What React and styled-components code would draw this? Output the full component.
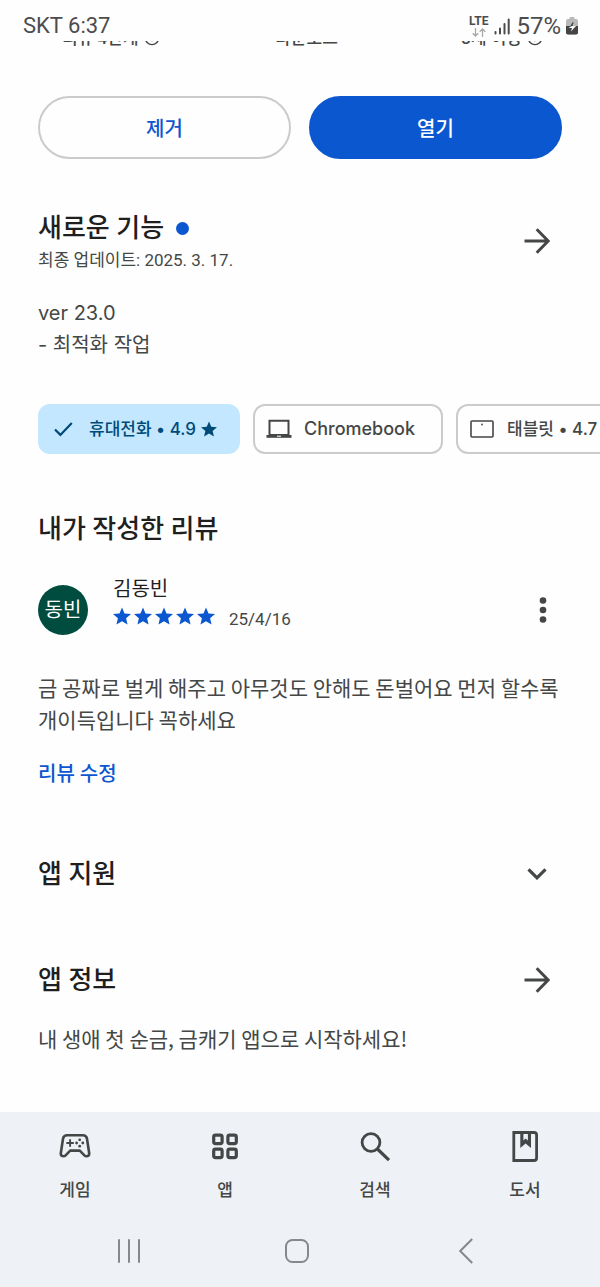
import React from 'react';
import styled, { createGlobalStyle } from 'styled-components';

const GlobalStyle = createGlobalStyle`
    *{
        box-sizing:border-box;
    }

    body{
        margin:0;
        background-color:#fefefe;
        color:#1f1f1f;
        font-family:Roboto, "Noto Sans CJK KR", sans-serif;
    }

    h2, p{
        margin:0;
    }

    button{
        padding:0;
        border:none;
        background:none;
        color:inherit;
        font-family:inherit;
        cursor:pointer;
    }

    svg{
        display:block;
        flex:none;
    }
`;

const Page = styled.div`
    display:flex;
    flex-direction:column;
    min-height:100vh;
`;

const StatusBar = styled.header`
    display:flex;
    align-items:flex-end;
    justify-content:space-between;
    height:41px;
    padding:0 22px 0 23px;
    color:#4c4c4e;
    font-size:22px;
    line-height:30px;
`;

const StatusIcons = styled.div`
    display:flex;
    align-items:center;
    gap:6px;
`;

const Network = styled.span`
    display:flex;
    flex-direction:column;
    align-items:center;
    gap:1px;
    font-size:12px;
    font-weight:700;
    line-height:11px;
`;

const Battery = styled.span`
    display:flex;
    align-items:center;
    gap:5px;
    font-size:24px;
`;

const Stats = styled.div`
    display:flex;
    align-items:flex-end;
    height:6px;
    overflow:hidden;
    padding-left:13px;
    color:#444746;
    font-size:17px;
    font-weight:500;
    line-height:18px;
`;

const Stat = styled.div`
    flex:1;
    display:flex;
    align-items:center;
    justify-content:center;
    gap:5px;
`;

const Content = styled.main`
    flex:1;
    padding:49px 38px 56px;
`;

const Actions = styled.div`
    display:flex;
    gap:18px;
`;

const ActionButton = styled.button`
    flex:1;
    height:63px;
    border:2px solid ${({ $filled }) => ($filled ? '#0b57d0' : '#cbcbcb')};
    border-radius:32px;
    background-color:${({ $filled }) => ($filled ? '#0b57d0' : 'transparent')};
    color:${({ $filled }) => ($filled ? '#fff' : '#0b57d0')};
    font-size:20px;
    font-weight:500;
`;

const SectionHead = styled.div`
    display:flex;
    align-items:center;
    justify-content:space-between;
    margin-top:${({ $top }) => $top}px;
`;

const Title = styled.h2`
    display:flex;
    align-items:center;
    gap:12px;
    font-size:26px;
    font-weight:500;
    line-height:38px;
`;

const NewDot = styled.span`
    width:13px;
    height:13px;
    border-radius:50%;
    background-color:#0b57d0;
`;

const Updated = styled.p`
    color:#444746;
    font-size:17px;
    line-height:26px;
`;

const IconButton = styled.button`
    display:flex;
    align-items:center;
    justify-content:center;
    width:38px;
    height:38px;
    margin-right:6px;
    color:#444746;
`;

const Text = styled.p`
    margin-top:${({ $top }) => $top}px;
    color:#444746;
    font-family:"Noto Sans CJK KR", sans-serif;
    font-size:21px;
    line-height:32px;
    word-break:keep-all;
`;

const Notes = styled(Text)`
    font-family:Inter, "Noto Sans CJK KR", sans-serif;
    font-size:20px;
`;

const Chips = styled.div`
    display:flex;
    gap:13px;
    margin:43px -38px 0 0;
    overflow:hidden;
`;

const Chip = styled.button`
    flex:none;
    display:flex;
    align-items:center;
    gap:12px;
    height:50px;
    padding:0 ${({ $large }) => ($large ? 26 : 21)}px 0 11px;
    border:2px solid ${({ $selected }) => ($selected ? '#c2e7ff' : '#cbcbcb')};
    border-radius:12px;
    background-color:${({ $selected }) => ($selected ? '#c2e7ff' : 'transparent')};
    color:${({ $selected }) => ($selected ? '#004a77' : '#444746')};
    font-family:Inter, "Noto Sans CJK KR", sans-serif;
    font-size:${({ $large }) => ($large ? 18 : 17)}px;
    font-weight:500;
    line-height:26px;
`;

const ChipLabel = styled.span`
    display:flex;
    align-items:center;
    gap:5px;
`;

const Review = styled.div`
    display:flex;
    align-items:flex-end;
    margin-top:26px;
`;

const Avatar = styled.div`
    display:flex;
    align-items:center;
    justify-content:center;
    width:50px;
    height:50px;
    margin-right:25px;
    border-radius:50%;
    background-color:#004d40;
    color:#fff;
    font-size:20px;
    line-height:28px;
`;

const Reviewer = styled.div`
    flex:1;
    font-size:20px;
    line-height:30px;
`;

const Rating = styled.div`
    display:flex;
    align-items:baseline;
    gap:3px;
    height:31px;
    color:#0b57d0;
`;

const ReviewDate = styled.span`
    margin-left:11px;
    color:#444746;
    font-size:17px;
`;

const MenuButton = styled(IconButton)`
    height:50px;
    margin-right:0;
`;

const EditLink = styled.a`
    display:inline-block;
    margin-top:23px;
    color:#0b57d0;
    font-size:20px;
    font-weight:500;
    line-height:32px;
    text-decoration:none;
`;

const BottomBar = styled.footer`
    background-color:#eef2f7;
    color:#444746;
`;

const Nav = styled.nav`
    display:flex;
    height:103px;
`;

const NavItem = styled.a`
    flex:1;
    display:flex;
    flex-direction:column;
    align-items:center;
    gap:14px;
    padding-top:17px;
    color:inherit;
    font-size:17px;
    font-weight:500;
    line-height:26px;
    text-decoration:none;
`;

const SystemKeys = styled.div`
    display:flex;
    height:72px;
    padding:0 50px 0 45px;
    color:#85888c;
`;

const SystemKey = styled.button`
    flex:1;
    display:flex;
    align-items:center;
    justify-content:center;
`;

const InfoIcon = () => (
    <svg width="16" height="16" viewBox="0 0 17 17" fill="none" stroke="currentColor" strokeWidth="1.5">
        <circle cx="8.5" cy="8.5" r="7" />
        <path d="M8.5 7.5V12M8.5 4.5V6" />
    </svg>
);

const DataArrows = () => (
    <svg width="14" height="9" viewBox="0 0 14 9" fill="none" stroke="#a9a9a9" strokeWidth="1.3">
        <path d="M3.5 0V8M0.7 5.2L3.5 8L6.3 5.2M10.5 9V1M7.7 3.8L10.5 1L13.3 3.8" />
    </svg>
);

const SignalIcon = () => (
    <svg width="16" height="17" viewBox="0 0 16 17" stroke="currentColor" strokeWidth="2" strokeLinecap="round">
        <path d="M1.5 14V15.5M6 10.5V15.5M10.5 6V15.5M14.7 1.5V15.5" />
    </svg>
);

const BatteryIcon = () => (
    <svg width="12" height="18" viewBox="0 0 12 18">
        <path d="M3.5 2V1Q3.5 0 4.5 0H7.5Q8.5 0 8.5 1V2H10Q12 2 12 4V15.5Q12 17.5 10 17.5H2Q0 17.5 0 15.5V4Q0 2 2 2Z" fill="#b9b9b9" />
        <path d="M0 9H12V15.5Q12 17.5 10 17.5H2Q0 17.5 0 15.5Z" fill="#444" />
        <path d="M7.2 5.5L5.2 9H7" stroke="#444" strokeWidth="1.4" fill="none" />
        <path d="M5.8 9H10L5 14.5L6 11H2.5Z" fill="#fff" />
    </svg>
);

const ArrowIcon = () => (
    <svg width="26" height="26" viewBox="0 0 26 26" fill="none" stroke="currentColor" strokeWidth="3">
        <path d="M0.5 13H24M12.7 1.3L24.2 13L12.7 24.7" />
    </svg>
);

const ChevronIcon = () => (
    <svg width="20" height="12" viewBox="0 0 20 12" fill="none" stroke="currentColor" strokeWidth="3.2">
        <path d="M1.5 1.3L10 9.8L18.5 1.3" />
    </svg>
);

const MoreIcon = () => (
    <svg width="8" height="26" viewBox="0 0 8 26" fill="currentColor">
        <circle cx="4" cy="3.5" r="3.3" />
        <circle cx="4" cy="13" r="3.3" />
        <circle cx="4" cy="22.5" r="3.3" />
    </svg>
);

const StarIcon = ({ size }) => (
    <svg width={size} height={size} viewBox="2 2 20 19" fill="currentColor">
        <path d="M12 17.27L18.18 21l-1.64-7.03L22 9.24l-7.19-.61L12 2 9.19 8.63 2 9.24l5.46 4.73L5.82 21z" />
    </svg>
);

const CheckIcon = () => (
    <svg width="26" height="20" viewBox="0 0 26 20" fill="none" stroke="currentColor" strokeWidth="2.2">
        <path d="M4 10.5L9.4 15.9L20.8 4" />
    </svg>
);

const LaptopIcon = () => (
    <svg width="26" height="20" viewBox="0 0 26 20">
        <path d="M3.5 1.8H22.5V16H3.5Z" fill="none" stroke="currentColor" strokeWidth="2" />
        <path d="M0.5 16H25.5V18.8H0.5Z" fill="currentColor" />
        <path d="M11 17.2H15" stroke="#fff" strokeWidth="1" />
    </svg>
);

const TabletIcon = () => (
    <svg width="26" height="20" viewBox="0 0 26 20">
        <rect x="2" y="2" width="22" height="16" rx="1" fill="none" stroke="currentColor" strokeWidth="1.6" />
        <circle cx="13" cy="5.5" r="0.9" fill="currentColor" />
    </svg>
);

const GamepadIcon = () => (
    <svg width="34" height="34" viewBox="0 0 34 34" fill="none" stroke="currentColor" strokeWidth="2.6" strokeLinejoin="round">
        <path d="M9.2 6.3H24.8Q28.4 6.3 29 9.8L31.2 24.2Q31.5 27 28.8 27.3Q27.4 27.4 26.4 26.3L21.8 21.6H12.2L7.6 26.3Q6.6 27.4 5.2 27.3Q2.5 27 2.8 24.2L5 9.8Q5.6 6.3 9.2 6.3Z" />
        <path d="M8.4 14H15.8M12.1 10.3V17.7" strokeWidth="1.9" />
        <g fill="currentColor" stroke="none">
            <circle cx="21.7" cy="10.8" r="1.4" />
            <circle cx="18.6" cy="14" r="1.4" />
            <circle cx="24.8" cy="14" r="1.4" />
            <circle cx="21.7" cy="17.2" r="1.4" />
        </g>
    </svg>
);

const AppsIcon = () => (
    <svg width="34" height="34" viewBox="0 0 34 34" fill="none" stroke="currentColor" strokeWidth="3.2">
        <rect x="5.7" y="6.2" width="8.4" height="8.4" rx="1.8" />
        <rect x="19.9" y="6.2" width="8.4" height="8.4" rx="1.8" />
        <rect x="5.7" y="20.2" width="8.4" height="8.4" rx="1.8" />
        <rect x="19.9" y="20.2" width="8.4" height="8.4" rx="1.8" />
    </svg>
);

const SearchIcon = () => (
    <svg width="34" height="34" viewBox="0 0 34 34" fill="none" stroke="currentColor" strokeWidth="2.8">
        <circle cx="13" cy="13.5" r="8.9" />
        <path d="M19.4 20L31 31.2" strokeWidth="3.2" />
    </svg>
);

const BookIcon = () => (
    <svg width="34" height="34" viewBox="0 0 34 34">
        <path d="M5.8 3.5H26Q28.6 3.5 28.6 6V29Q28.6 31.5 26 31.5H5.8Z" fill="none" stroke="currentColor" strokeWidth="2.8" />
        <path d="M12.3 4H23V19L17.6 14.6L12.3 19Z" fill="currentColor" />
        <path d="M15.4 5H19.9V11.5L17.6 9.6L15.4 11.5Z" fill="#eef2f7" />
    </svg>
);

const RecentsIcon = () => (
    <svg width="24" height="24" viewBox="0 0 24 24" stroke="currentColor" strokeWidth="2" strokeLinecap="round">
        <path d="M2 1V23M12 1V23M22 1V23" />
    </svg>
);

const HomeIcon = () => (
    <svg width="24" height="24" viewBox="0 0 24 24" fill="none" stroke="currentColor" strokeWidth="2">
        <rect x="1" y="1" width="22" height="22" rx="6.5" />
    </svg>
);

const BackIcon = () => (
    <svg width="14" height="26" viewBox="0 0 14 26" fill="none" stroke="currentColor" strokeWidth="2">
        <path d="M13.2 1L1.2 13L13.2 25" />
    </svg>
);

const navItems = [
    { label: '게임', Icon: GamepadIcon },
    { label: '앱', Icon: AppsIcon },
    { label: '검색', Icon: SearchIcon },
    { label: '도서', Icon: BookIcon },
];

function App() {
    return (
        <Page>
            <GlobalStyle />
            <StatusBar>
                <span>SKT 6:37</span>
                <StatusIcons>
                    <Network>
                        LTE
                        <DataArrows />
                    </Network>
                    <SignalIcon />
                    <Battery>57% <BatteryIcon /></Battery>
                </StatusIcons>
            </StatusBar>
            <Stats>
                <Stat>리뷰 4만개 <InfoIcon /></Stat>
                <Stat>다운로드</Stat>
                <Stat>3세 이상 <InfoIcon /></Stat>
            </Stats>

            <Content>
                <Actions>
                    <ActionButton>제거</ActionButton>
                    <ActionButton $filled>열기</ActionButton>
                </Actions>

                <SectionHead $top={50}>
                    <div>
                        <Title>새로운 기능 <NewDot /></Title>
                        <Updated>최종 업데이트: 2025. 3. 17.</Updated>
                    </div>
                    <IconButton aria-label="새로운 기능 더보기"><ArrowIcon /></IconButton>
                </SectionHead>
                <Notes $top={24}>ver 23.0<br />- 최적화 작업</Notes>

                <Chips>
                    <Chip $selected aria-pressed="true">
                        <CheckIcon />
                        <ChipLabel>휴대전화 • 4.9 <StarIcon size={16} /></ChipLabel>
                    </Chip>
                    <Chip $large aria-pressed="false">
                        <LaptopIcon />
                        <ChipLabel>Chromebook</ChipLabel>
                    </Chip>
                    <Chip aria-pressed="false">
                        <TabletIcon />
                        <ChipLabel>태블릿 • 4.7 <StarIcon size={16} /></ChipLabel>
                    </Chip>
                </Chips>

                <SectionHead $top={56}>
                    <Title>내가 작성한 리뷰</Title>
                </SectionHead>
                <Review>
                    <Avatar>동빈</Avatar>
                    <Reviewer>
                        김동빈
                        <Rating role="img" aria-label="별점 5점">
                            {[1, 2, 3, 4, 5].map((n) => <StarIcon key={n} size={18} />)}
                            <ReviewDate>25/4/16</ReviewDate>
                        </Rating>
                    </Reviewer>
                    <MenuButton aria-label="리뷰 메뉴"><MoreIcon /></MenuButton>
                </Review>
                <Text $top={36}>금 공짜로 벌게 해주고 아무것도 안해도 돈벌어요 먼저 할수록 개이득입니다 꼭하세요</Text>
                <EditLink href="#review">리뷰 수정</EditLink>

                <SectionHead $top={65}>
                    <Title>앱 지원</Title>
                    <IconButton aria-label="앱 지원 펼치기"><ChevronIcon /></IconButton>
                </SectionHead>
                <SectionHead $top={68}>
                    <Title>앱 정보</Title>
                    <IconButton aria-label="앱 정보 더보기"><ArrowIcon /></IconButton>
                </SectionHead>
                <Text $top={23}>내 생애 첫 순금, 금캐기 앱으로 시작하세요!</Text>
            </Content>

            <BottomBar>
                <Nav>
                    {navItems.map(({ label, Icon }) => (
                        <NavItem key={label} href="#">
                            <Icon />
                            {label}
                        </NavItem>
                    ))}
                </Nav>
                <SystemKeys>
                    <SystemKey aria-label="최근 앱"><RecentsIcon /></SystemKey>
                    <SystemKey aria-label="홈"><HomeIcon /></SystemKey>
                    <SystemKey aria-label="뒤로"><BackIcon /></SystemKey>
                </SystemKeys>
            </BottomBar>
        </Page>
    );
}

export default App;
